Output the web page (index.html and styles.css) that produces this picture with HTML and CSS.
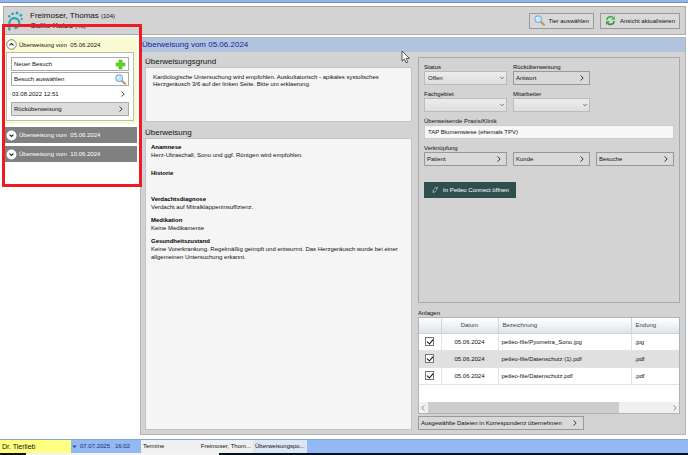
FILE: index.html
```html
<!DOCTYPE html>
<html lang="de">
<head>
  <meta charset="UTF-8">
  <meta name="viewport" content="width=device-width, initial-scale=1.0">
  <title>Überweisung</title>
  <link rel="stylesheet" href="styles.css">
</head>
<body>
  <svg class="defs" aria-hidden="true">
    <symbol id="right" viewBox="0 0 6 8"><path d="M1.5 1.5 L4.2 4 L1.5 6.5" fill="none" stroke="currentColor" stroke-width=".8"/></symbol>
    <symbol id="left" viewBox="0 0 6 8"><path d="M4.5 1.5 L1.8 4 L4.5 6.5" fill="none" stroke="currentColor" stroke-width=".8"/></symbol>
    <symbol id="down" viewBox="0 0 6 8"><path d="M1.2 3 L3 4.8 L4.8 3" fill="none" stroke="#666" stroke-width=".9"/></symbol>
    <symbol id="lens" viewBox="0 0 12 12">
      <path d="M7 7 L11 10.6" stroke="#c08a4a" stroke-width="2" stroke-linecap="round"/>
      <circle cx="4.6" cy="4.6" r="3.6" fill="#c4e6fa" stroke="#7fb2dc" stroke-width="1.2"/>
      <path d="M2.6 4.6 A2 2 0 0 1 4.6 2.6" fill="none" stroke="#fff" stroke-width="1"/>
    </symbol>
  </svg>

  <div class="window-edge"></div>

  <header class="header">
    <svg class="logo" viewBox="0 0 18 22">
      <path d="M2.5 21 V13.5 A5.3 5.3 0 1 1 7.8 18.6" fill="none" stroke="#2fa3b5" stroke-width="2.3"/>
      <g fill="#2fa3b5">
        <circle cx="2.4" cy="6" r="1.3"/>
        <circle cx="6" cy="3.4" r="1.5"/>
        <circle cx="10.6" cy="2.6" r="1.6"/>
        <circle cx="14.6" cy="5" r="1.5"/>
        <circle cx="15.6" cy="9" r="1.2"/>
      </g>
    </svg>
    <div class="patient">
      <div>Freimoser, Thomas <small>(104)</small></div>
      <div>Calito Katze <small>(48)</small></div>
    </div>
    <button class="button tool"><svg class="icon"><use href="#lens"/></svg>Tier auswählen</button>
    <button class="button tool">
      <svg class="icon" viewBox="0 0 12 12">
        <path d="M2 5.4 A4 4 0 0 1 8.6 2.8" fill="none" stroke="#43b649" stroke-width="2"/>
        <path d="M10.8 1 V5.2 H6.6 Z" fill="#43b649"/>
        <path d="M10 6.6 A4 4 0 0 1 3.4 9.2" fill="none" stroke="#2f9c3a" stroke-width="2"/>
        <path d="M1.2 11 V6.8 H5.4 Z" fill="#2f9c3a"/>
      </svg>
      Ansicht aktualisieren
    </button>
  </header>

  <div class="workspace">
    <nav class="sidebar">
      <section class="visit open">
        <button class="visit-head">
          <svg class="round" viewBox="0 0 12 12"><circle cx="6" cy="6" r="5.2" fill="#fff" stroke="#555" stroke-width=".8"/><path d="M3.8 7 L6 4.9 L8.2 7" fill="none" stroke="#222" stroke-width="1.2"/></svg>
          Überweisung vom&nbsp; 05.06.2024
        </button>
        <div class="visit-body">
          <button class="side-button">Neuer Besuch
            <svg class="icon" viewBox="0 0 12 12"><path d="M4.3 1.2 H7.7 V4.3 H10.8 V7.7 H7.7 V10.8 H4.3 V7.7 H1.2 V4.3 H4.3 Z" fill="#62d51f" stroke="#48b010" stroke-width=".6"/></svg>
          </button>
          <button class="side-button">Besuch auswählen<svg class="icon"><use href="#lens"/></svg></button>
          <button class="side-button plain">03.08.2022 12:51<svg class="chevron"><use href="#right"/></svg></button>
          <button class="side-button gray">Rücküberweisung<svg class="chevron"><use href="#right"/></svg></button>
        </div>
      </section>
      <section class="visit closed">
        <button class="visit-head">
          <svg class="round" viewBox="0 0 12 12"><circle cx="6" cy="6" r="5.4" fill="#fff"/><path d="M3.8 5 L6 7.1 L8.2 5" fill="none" stroke="#222" stroke-width="1.2"/></svg>
          Überweisung vom&nbsp; 05.06.2024
        </button>
      </section>
      <section class="visit closed">
        <button class="visit-head">
          <svg class="round" viewBox="0 0 12 12"><circle cx="6" cy="6" r="5.4" fill="#fff"/><path d="M3.8 5 L6 7.1 L8.2 5" fill="none" stroke="#222" stroke-width="1.2"/></svg>
          Überweisung vom&nbsp; 10.06.2024
        </button>
      </section>
    </nav>

    <main class="referral">
      <h1 class="title">Überweisung vom&nbsp;05.06.2024</h1>
      <div class="columns">
        <div class="report">
          <h2>Überweisungsgrund</h2>
          <div class="textbox reason">Kardiologische Untersuchung wird empfohlen. Auskultatorisch - apikales systolisches Herzgeräusch 3/6 auf der linken Seite. Bitte um erklaerung.</div>
          <h2>Überweisung</h2>
          <div class="textbox details">
            <h3>Anamnese</h3>
            <p class="long">Herz-Ultraschall, Sono und ggf. Röntgen wird empfohlen.</p>
            <h3>Historie</h3>
            <p class="long"></p>
            <h3>Verdachtsdiagnose</h3>
            <p>Verdacht auf Mitralklappeninsuffizienz.</p>
            <h3>Medikation</h3>
            <p>Keine Medikamente</p>
            <h3>Gesundheitszustand</h3>
            <p>Keine Vorerkrankung. Regelmäßig geimpft und entwurmt. Das Herzgeräusch wurde bei einer allgemeinen Untersuchung erkannt.</p>
          </div>
        </div>

        <div class="side">
          <form class="form">
            <div class="field">
              <label for="status">Status</label>
              <div class="select"><select id="status"><option>Offen</option></select><svg class="chevron"><use href="#down"/></svg></div>
            </div>
            <div class="field">
              <label for="answer">Rücküberweisung</label>
              <button type="button" id="answer" class="button link">Antwort<svg class="chevron"><use href="#right"/></svg></button>
            </div>
            <div class="field first">
              <label for="area">Fachgebiet</label>
              <div class="select"><select id="area"><option></option></select><svg class="chevron"><use href="#down"/></svg></div>
            </div>
            <div class="field">
              <label for="staff">Mitarbeiter</label>
              <div class="select"><select id="staff"><option></option></select><svg class="chevron"><use href="#down"/></svg></div>
            </div>
            <div class="field wide">
              <label for="clinic">Überweisende Praxis/Klinik</label>
              <input type="text" id="clinic" value="TAP Blumenwiese (ehemals TPV)">
            </div>
            <div class="field first">
              <label for="link">Verknüpfung</label>
              <button type="button" id="link" class="button link">Patient<svg class="chevron"><use href="#right"/></svg></button>
            </div>
            <button type="button" class="button link">Kunde<svg class="chevron"><use href="#right"/></svg></button>
            <button type="button" class="button link">Besuche<svg class="chevron"><use href="#right"/></svg></button>
            <button type="button" class="connect">
              <svg class="chain" viewBox="0 0 8 8"><g fill="none" stroke="#b9cccc" stroke-width=".7"><path d="M3 5.6 L1.6 7 M2.4 3.6 Q1 6.4 3.4 6.2 L4.8 5.4 M5.2 4.4 Q7 1.2 4.8 1.4 L3 2.8 M5.4 2.4 L7.2 .8"/></g></svg>
              In Petleo Connect öffnen
            </button>
          </form>

          <div class="caption">Anlagen</div>
          <div class="files">
            <table>
              <thead>
                <tr><th class="check"></th><th class="date">Datum</th><th>Bezeichnung</th><th class="ext">Endung</th></tr>
              </thead>
              <tbody>
                <tr><td class="check"><input type="checkbox" aria-label="Pyometra_Sono.jpg" checked></td><td class="date">05.06.2024</td><td>petleo-file/Pyometra_Sono.jpg</td><td>.jpg</td></tr>
                <tr><td class="check"><input type="checkbox" aria-label="Datenschutz (1).pdf" checked></td><td class="date">05.06.2024</td><td>petleo-file/Datenschutz (1).pdf</td><td>.pdf</td></tr>
                <tr><td class="check"><input type="checkbox" aria-label="Datenschutz.pdf" checked></td><td class="date">05.06.2024</td><td>petleo-file/Datenschutz.pdf</td><td>.pdf</td></tr>
              </tbody>
            </table>
            <div class="scrollbar">
              <svg class="chevron"><use href="#left"/></svg>
              <div class="track"><div class="thumb"></div></div>
              <svg class="chevron"><use href="#right"/></svg>
            </div>
          </div>
          <button class="button transfer">Ausgewählte Dateien in Korrespondenz übernehmen<svg class="chevron"><use href="#right"/></svg></button>
        </div>
      </div>
    </main>
  </div>

  <footer class="statusbar">
    <div class="user"><select aria-label="Benutzer"><option>Dr. Tierlieb</option></select><svg class="arrow" viewBox="0 0 6 8"><path d="M1 3 H5 L3 5.4 Z" fill="#26528f"/></svg></div>
    <div class="clock">07.07.2025 &nbsp; 16:02</div>
    <div class="tab wide-tab"><span>Termine</span><span>Freimoser, Thom...</span></div>
    <div class="tab">Überweisungspo...</div>
  </footer>
  <div class="taskbar"></div>

  <div class="marker"></div>
  <svg class="cursor" viewBox="0 0 9 14"><path d="M1 1 V11.2 L3.4 9 L5 12.8 L6.8 12 L5.2 8.4 H8.4 Z" fill="#fff" stroke="#333" stroke-width=".8"/></svg>
</body>
</html>
```
FILE: styles.css
```css
* {
  box-sizing: border-box;
}
body {
  margin: 0;
  min-height: 100vh;
  display: flex;
  flex-direction: column;
  position: relative;
  background: #fff;
  color: #111;
  font: 6px/8px "Liberation Sans", Arial, sans-serif;
}
button, input, select {
  font: inherit;
  color: inherit;
  margin: 0;
  border-radius: 0;
}
h1, h2, h3, p {
  margin: 0;
  font-weight: normal;
}
.defs {
  position: absolute;
  width: 0;
  height: 0;
}
.icon {
  width: 11px;
  height: 11px;
  flex: none;
}
.chevron {
  width: 6px;
  height: 8px;
  flex: none;
}
.window-edge {
  height: 3px;
  background: #8fb5f3;
  border-bottom: 1px solid #7d8ea8;
}

/* header */
.header {
  display: flex;
  align-items: center;
  gap: 6px;
  height: 29px;
  margin: 3px 2px 0 3px;
  padding: 0 5px 0 3px;
  background: #d3d3d3;
  border: 1px solid #aaa;
}
.logo {
  width: 17px;
  height: 22px;
}
.patient {
  flex: 1;
  font-size: 8px;
  line-height: 10px;
}
.patient small {
  font-size: 6px;
}
.button {
  display: flex;
  align-items: center;
  padding: 0 5px;
  background: #d9d9d9;
  border: 1px solid #999;
  white-space: nowrap;
}
.tool {
  gap: 4px;
  height: 16px;
  padding: 0 4px;
}

/* sidebar */
.workspace {
  flex: 1;
  display: flex;
  gap: 3px;
  margin: 2px 2px 0 5px;
}
.sidebar {
  width: 132px;
  display: flex;
  flex-direction: column;
  gap: 3px;
}
.visit-head {
  display: flex;
  align-items: center;
  gap: 2px;
  width: 100%;
  height: 16px;
  padding: 0 1px;
  border: 0;
  background: none;
}
.round {
  width: 11px;
  height: 11px;
}
.open {
  padding: 0 3px 3px 1px;
  background: #fafad2;
}
.closed {
  background: #808080;
  color: #fff;
}
.open .visit-head {
  height: 15px;
  padding: 0;
}
.visit-body {
  display: flex;
  flex-direction: column;
  gap: 1px;
  padding: 4px;
  background: #fff;
  border: 1px solid #bbb;
}
.side-button {
  display: flex;
  align-items: center;
  justify-content: space-between;
  height: 14px;
  padding: 0 2px;
  background: #fff;
  border: 1px solid #aaa;
}
.side-button .chevron {
  margin-right: 2px;
}
.plain {
  padding: 0;
  border-color: transparent;
}
.gray {
  background: #dcdcdc;
}

/* referral */
.referral {
  flex: 1;
  min-width: 0;
  display: flex;
  flex-direction: column;
  background: #d3d3d3;
  border: 1px solid #b4b4b4;
}
.title {
  height: 14px;
  padding: 0 1px;
  background: #b0c4de;
  color: #1a1a9c;
  font-size: 8px;
  line-height: 14px;
}
.columns {
  flex: 1;
  display: flex;
  gap: 6px;
  padding: 5px 5px 4px 4px;
}
.report {
  flex: 1;
  min-width: 0;
  display: flex;
  flex-direction: column;
}
.report h2 {
  font-size: 8px;
  line-height: 10px;
}
.textbox {
  background: #f5f5f5;
  border: 1px solid #c4c4c4;
  line-height: 7px;
}
.reason {
  height: 55px;
  margin-bottom: 6px;
  padding: 6px 7px;
}
.details {
  flex: 1;
  padding: 4px 5px;
}
.details h3 {
  font-size: 6px;
  line-height: 8px;
  font-weight: bold;
  color: #000;
}
.details p {
  min-height: 8px;
  margin-bottom: 5px;
  line-height: 8px;
}
.details .long {
  min-height: 13px;
}
.side {
  width: 262px;
  display: flex;
  flex-direction: column;
}
.form {
  flex: 1;
  display: grid;
  grid-template-columns: 83px 77px 78px;
  column-gap: 6px;
  row-gap: 5px;
  align-content: start;
  align-items: end;
  padding: 5px;
  border: 1px solid #aaa;
}
.field {
  display: flex;
  flex-direction: column;
}
.first {
  grid-column: 1;
}
.wide {
  grid-column: 1 / -1;
}
.select {
  display: grid;
  align-items: center;
}
.select > * {
  grid-area: 1 / 1;
}
.select select {
  appearance: none;
  height: 14px;
  padding: 0 3px;
  background: linear-gradient(#ececec, #dedede);
  border: 1px solid #bbb;
}
.select .chevron {
  justify-self: end;
  margin-right: 2px;
  pointer-events: none;
}
.link {
  justify-content: space-between;
  height: 14px;
  padding: 0 4px 0 2px;
}
.form input {
  height: 14px;
  padding: 0 3px;
  background: #f7f7f7;
  border: 1px solid #ccc;
}
.connect {
  grid-column: 1 / 3;
  justify-self: start;
  display: flex;
  align-items: center;
  gap: 4px;
  height: 16px;
  margin-top: 11px;
  padding: 0 7px;
  background: #2f4f4f;
  color: #fff;
  border: 0;
}
.chain {
  width: 8px;
  height: 8px;
}
.caption {
  padding-top: 6px;
}
.files {
  display: flex;
  flex-direction: column;
  justify-content: space-between;
  height: 97px;
  background: #fff;
  border: 1px solid #aab4bc;
}
table {
  width: 100%;
  table-layout: fixed;
  border-collapse: collapse;
}
th, td {
  height: 17px;
  padding: 0 3px;
  text-align: left;
  border: solid #e2e2e2;
  border-width: 0 0 1px 1px;
}
th {
  height: 15px;
  padding: 0 4px;
  font-weight: normal;
  color: #444;
  background: linear-gradient(#fff, #e0e4e8);
  border-color: #d0d4d8;
}
tbody tr:nth-child(even) {
  background: #e0e0e0;
}
.check {
  width: 22px;
  border-left: 0;
  text-align: center;
}
.date {
  width: 57px;
  text-align: center;
}
.ext {
  width: 48px;
}
td input {
  appearance: none;
  display: block;
  width: 9px;
  height: 9px;
  margin: 0 auto;
  background: #fff;
  border: 1px solid #777;
}
td input:checked::before {
  content: "";
  display: block;
  width: 3px;
  height: 5px;
  margin: 0 2px;
  border: solid #111;
  border-width: 0 1px 1px 0;
  transform: rotate(40deg);
}
.scrollbar {
  display: flex;
  align-items: center;
  gap: 2px;
  height: 11px;
  padding: 0 1px;
  background: #f0f0f0;
  color: #777;
}
.track {
  flex: 1;
  height: 100%;
}
.thumb {
  width: 79%;
  height: 100%;
  background: #cdcdcd;
}
.transfer {
  align-self: flex-start;
  gap: 10px;
  height: 14px;
  margin-top: 2px;
  padding: 0 5px 0 2px;
}

/* bottom bars */
.statusbar {
  display: flex;
  height: 14px;
  margin-top: 4px;
  background: #93b9f5;
  border-top: 1px solid #8aa4cc;
  line-height: 13px;
}
.user {
  display: flex;
  align-items: center;
  width: 78px;
}
.user select {
  appearance: none;
  flex: 1;
  height: 100%;
  padding: 0 2px;
  border: 0;
  background: #ffff80;
  font-size: 7px;
}
.arrow {
  width: 7px;
  height: 9px;
}
.clock {
  width: 63px;
  padding-left: 2px;
  color: #1c2c5c;
}
.tab {
  padding: 0 2px;
  background: #dbe6f6;
}
.wide-tab {
  display: flex;
  justify-content: space-between;
  width: 112px;
  background: #f0f0f0;
}
.taskbar {
  height: 2px;
  background: linear-gradient(90deg, #111 26px, #f4f4f4 26px 219px, #06101c 219px);
}

/* floating marks */
.marker {
  position: absolute;
  left: 2px;
  top: 24px;
  width: 140px;
  height: 163px;
  border: 3px solid #ed1c24;
  pointer-events: none;
}
.cursor {
  position: absolute;
  left: 401px;
  top: 50px;
  width: 9px;
  height: 14px;
}
```
